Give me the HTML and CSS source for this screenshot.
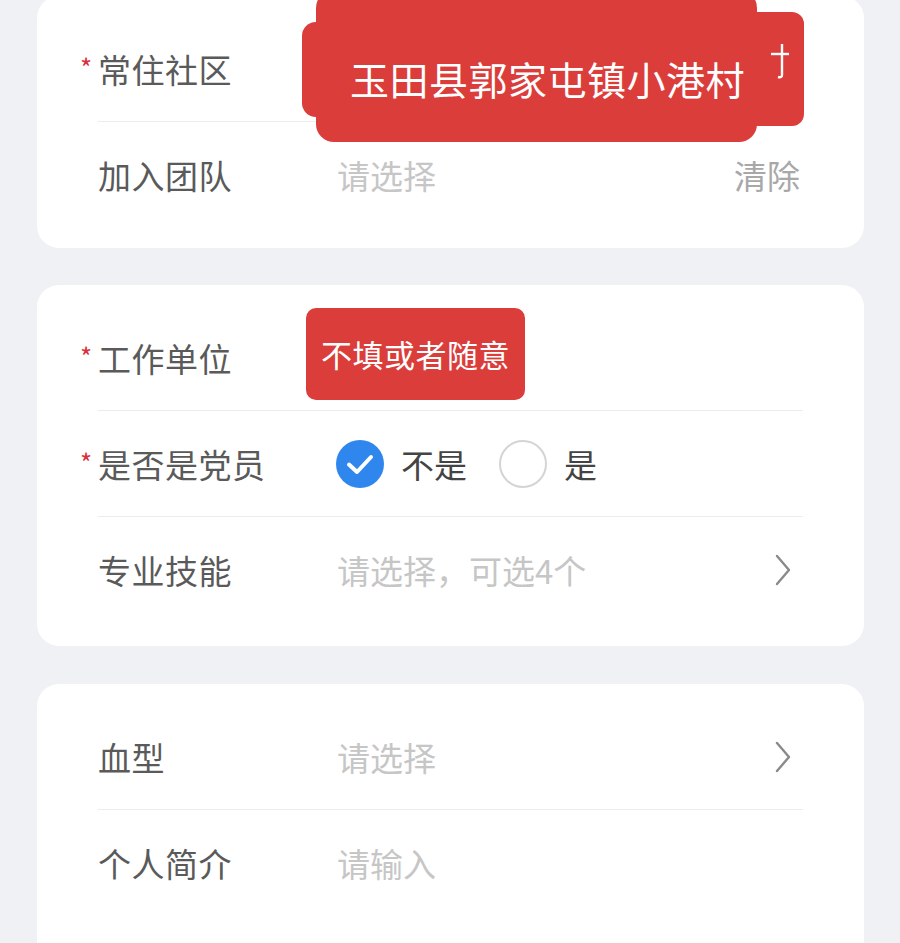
FILE: index.html
```html
<!DOCTYPE html>
<html lang="zh-CN">
<head>
  <meta charset="UTF-8">
  <title>个人信息</title>
  <link rel="stylesheet" href="styles.css">
</head>
<body>
  <div class="page">
    <!-- 社区 / 团队 -->
    <div class="card card-first">
      <div class="row">
        <div class="label"><span class="req">*</span>常住社区</div>
        <div class="value"></div>
      </div>
      <div class="row">
        <div class="label">加入团队</div>
        <div class="value placeholder">请选择</div>
        <div class="clear">清除</div>
      </div>

      <div class="mask mask-a">
        <span class="mask-text">玉田县郭家屯镇小港村</span>
      </div>
      <div class="mask mask-b"></div>
      <div class="mask mask-c"></div>
      <svg class="mask-glyph" width="24" height="40" viewBox="0 0 24 40">
        <path d="M3 12 H21" stroke="#fff" stroke-width="2.4" fill="none"/>
        <path d="M14 2 V33 Q14 36 10 35" stroke="#fff" stroke-width="2.4" fill="none"/>
      </svg>
    </div>

    <!-- 工作 / 党员 / 技能 -->
    <div class="card">
      <div class="row">
        <div class="label"><span class="req">*</span>工作单位</div>
        <div class="value"></div>
      </div>
      <div class="row">
        <div class="label"><span class="req">*</span>是否是党员</div>
        <div class="value radios">
          <span class="radio checked">
            <svg width="48" height="48" viewBox="0 0 48 48">
              <circle cx="24" cy="24" r="24" fill="#2f86ec"/>
              <path d="M13 24.5 L21 32 L35 17" stroke="#fff" stroke-width="4" fill="none" stroke-linecap="round" stroke-linejoin="round"/>
            </svg>
          </span>
          <span class="radio-text">不是</span>
          <span class="radio"></span>
          <span class="radio-text">是</span>
        </div>
      </div>
      <div class="row">
        <div class="label">专业技能</div>
        <div class="value placeholder">请选择，可选4个</div>
        <svg class="arrow" width="18" height="34" viewBox="0 0 18 34">
          <path d="M3 3 L15 17 L3 31" stroke="#8a8a8a" stroke-width="2.4" fill="none" stroke-linecap="round" stroke-linejoin="round"/>
        </svg>
      </div>

      <div class="tag">不填或者随意</div>
    </div>

    <!-- 血型 / 简介 -->
    <div class="card card-last">
      <div class="row">
        <div class="label">血型</div>
        <div class="value placeholder">请选择</div>
        <svg class="arrow" width="18" height="34" viewBox="0 0 18 34">
          <path d="M3 3 L15 17 L3 31" stroke="#8a8a8a" stroke-width="2.4" fill="none" stroke-linecap="round" stroke-linejoin="round"/>
        </svg>
      </div>
      <div class="row">
        <div class="label">个人简介</div>
        <div class="value placeholder">请输入</div>
      </div>
    </div>
  </div>
</body>
</html>
```

FILE: styles.css
```css
body {
  margin: 0;
  background: #f0f1f5;
  font-family: "Noto Sans CJK SC", "Noto Sans", sans-serif;
  color: #555;
  overflow: hidden;
}

.page {
  padding: 0 36px 0 37px;
}

.card {
  position: relative;
  background: #ffffff;
  border-radius: 22px;
  padding: 20px 0 24px;
  margin-bottom: 38px;
}

.card-first {
  margin-top: -4px;
  padding-bottom: 21px;
  margin-bottom: 37px;
}

.card-last {
  padding-bottom: 120px;
}

.row {
  display: flex;
  align-items: center;
  height: 105px;
  margin: 0 61px;
}

.row + .row {
  border-top: 1px solid #ececec;
}

.label {
  width: 239px;
  flex-shrink: 0;
  font-size: 33px;
  color: #5a5a5a;
  white-space: nowrap;
  letter-spacing: 0.5px;
}

.req {
  display: inline-block;
  width: 18px;
  margin-left: -18px;
  font-size: 26px;
  color: #d9303a;
  vertical-align: 5px;
}

.value {
  flex: 1;
  font-size: 33px;
}

.placeholder {
  color: #c6c6c6;
}

.clear {
  font-size: 33px;
  color: #a8a8a8;
  margin-right: 3px;
}

.arrow {
  margin-right: 11px;
}

.radios {
  display: flex;
  align-items: center;
}

.radio {
  width: 44px;
  height: 44px;
  border: 2px solid #d4d4d4;
  border-radius: 50%;
  margin-left: 1px;
}

.radio.checked {
  width: 48px;
  height: 48px;
  border: none;
  margin-left: -1px;
}

.radio.checked svg {
  display: block;
}

.radio-text {
  font-size: 33px;
  color: #444;
  margin: 0 31px 0 17px;
}

/* red cover marks pasted over the screenshot */
.mask {
  position: absolute;
  background: #db3d3b;
}

.mask-a {
  left: 279px;
  top: -6px;
  width: 441px;
  height: 152px;
  border-radius: 18px;
  z-index: 2;
  display: flex;
  align-items: center;
  padding: 24px 0 0 34px;
  box-sizing: border-box;
}

.mask-b {
  left: 265px;
  top: 26px;
  width: 200px;
  height: 95px;
  border-radius: 14px;
  z-index: 1;
}

.mask-c {
  left: 653px;
  top: 16px;
  width: 114px;
  height: 114px;
  border-radius: 12px;
  z-index: 1;
}

.mask-text {
  font-size: 39px;
  color: #fff;
  white-space: nowrap;
  letter-spacing: 0.5px;
}

.mask-glyph {
  position: absolute;
  left: 731px;
  top: 46px;
  z-index: 3;
}

.tag {
  position: absolute;
  left: 269px;
  top: 23px;
  width: 219px;
  height: 92px;
  border-radius: 10px;
  background: #db3d3b;
  color: #fff;
  font-size: 31px;
  letter-spacing: 0.5px;
  display: flex;
  align-items: center;
  justify-content: center;
  box-sizing: border-box;
  padding-bottom: 2px;
}
```
